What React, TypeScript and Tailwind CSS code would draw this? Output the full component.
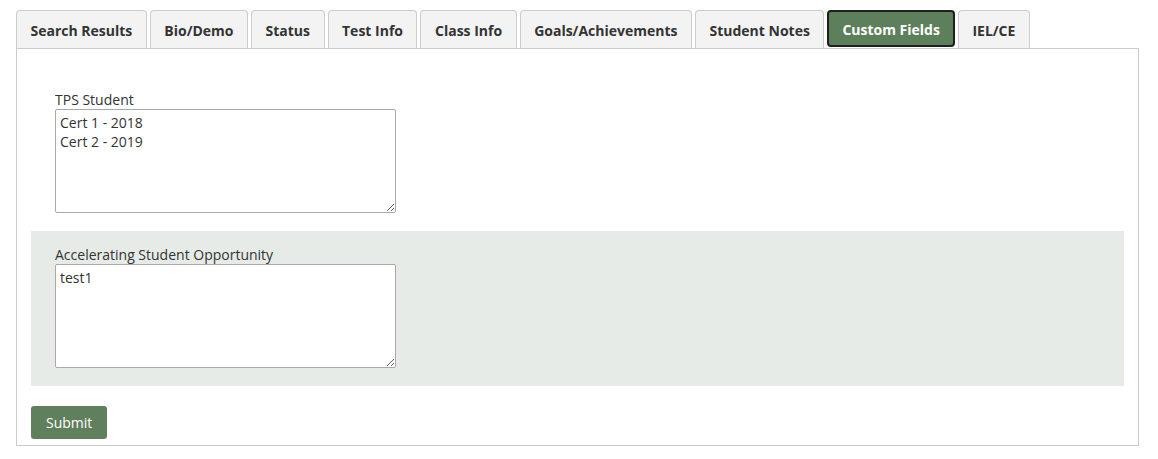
const tabs = [
  "Search Results",
  "Bio/Demo",
  "Status",
  "Test Info",
  "Class Info",
  "Goals/Achievements",
  "Student Notes",
  "Custom Fields",
  "IEL/CE",
];

const Field = ({ label, value }: { label: string; value: string }) => (
  <div>
    <label className="block text-[14px] leading-[18px] text-[#333]">{label}</label>
    <textarea
      defaultValue={value}
      className="block w-[341px] h-[104px] border border-[#a9a9a9] rounded-[2px] bg-white px-[4px] py-[3px] text-[14px] leading-[19px] text-[#333] outline-none"
    />
  </div>
);

export default function App() {
  return (
    <div className="min-h-screen bg-white px-[16px] pt-[10px] font-['Open_Sans',sans-serif]">
      <div className="flex gap-[3px]">
        {tabs.map((t) =>
          t === "Custom Fields" ? (
            <div
              key={t}
              className="h-[37px] px-[13px] pt-[1px] flex items-center border-2 border-[#1f1f1f] rounded-[4px] bg-[#5e7f5c] text-white text-[14px] font-bold"
            >
              {t}
            </div>
          ) : (
            <div
              key={t}
              className="h-[38px] px-[13.5px] pt-[2px] flex items-center border border-b-0 border-[#ccc] rounded-t-[4px] bg-[#f3f3f3] text-[#333] text-[14px] font-bold"
            >
              {t}
            </div>
          )
        )}
      </div>
      <div className="w-[1123px] border border-[#ccc] px-[14px] pb-[6px]">
        <div className="px-[24px] pt-[42px] pb-[18px]">
          <Field label="TPS Student" value={"Cert 1 - 2018\nCert 2 - 2019"} />
        </div>
        <div className="bg-[#e7ebe7] px-[24px] pt-[15px] pb-[18px]">
          <Field label="Accelerating Student Opportunity" value="test1" />
        </div>
        <button className="mt-[20px] h-[33px] px-[15px] rounded-[3px] bg-[#5f7f5d] text-white text-[14px]">
          Submit
        </button>
      </div>
    </div>
  );
}
